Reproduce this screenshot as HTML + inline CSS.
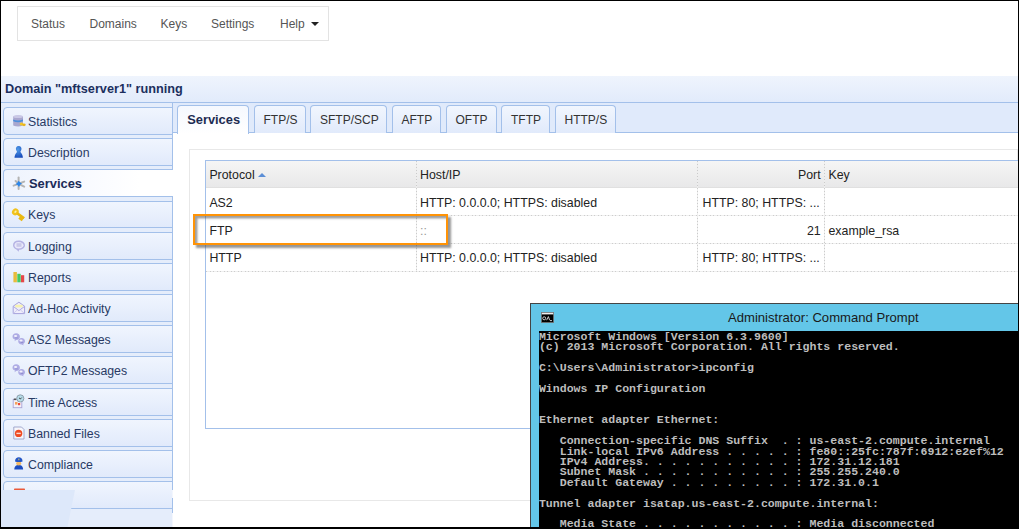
<!DOCTYPE html>
<html><head><meta charset="utf-8">
<style>
*{box-sizing:border-box}
html,body{margin:0;padding:0}
body{width:1019px;height:529px;overflow:hidden;position:relative;background:#fff;font-family:"Liberation Sans",sans-serif;font-size:12px;color:#333}
.a{position:absolute}
.t{position:absolute;white-space:nowrap;line-height:14px}
/* nav */
#nav{left:17px;top:6px;width:312px;height:35px;border:1px solid #e3e3e3;background:#fff}
.nv{color:#555;top:16.6px}
/* header */
#hdr{left:1px;top:75.5px;width:1018px;height:27.5px;background:linear-gradient(#eff4fd,#e2ebfb);border-bottom:1px solid #a3c0ea}
#hdrt{left:5px;top:81.5px;font-weight:bold;font-size:12.7px;color:#1c2f5e}
/* sidebar */
#side{left:1px;top:103px;width:172px;height:426px;background:#e5edfb;border-right:1px solid #a3c0ea}
.sb{position:absolute;left:3px;width:170px;height:28px;border:1px solid #a3c0ea;border-radius:4px 0 0 4px;background:linear-gradient(#f0f5fe,#e1eafb)}
.sb.act{background:linear-gradient(90deg,#eef3fd,#f8faff 45%,#fff 80%);border-right:none;width:171px}
.sbt{position:absolute;left:24px;top:6.5px;line-height:14px;white-space:nowrap;color:#283a64;font-size:12.3px}
.sbi{position:absolute;left:8px;top:7px;width:12px;height:12px}
/* tabs */
#tabbar{left:173px;top:103px;width:846px;height:30px;background:#e0eafb;border-bottom:1px solid #a3c0ea}
.tab{position:absolute;top:105px;height:28px;border:1px solid #a3c0ea;border-bottom:none;border-radius:4px 4px 0 0;background:linear-gradient(#f1f6fe,#e1eafb)}
.tab.act{background:linear-gradient(#f5f8fe,#fff);height:29px}
.tabt{position:absolute;top:7px;line-height:14px;white-space:nowrap;color:#333;font-size:12px}
#panel{left:173px;top:133px;width:846px;height:396px;background:#fff}
#fs{left:189px;top:149px;width:829px;height:351.5px;border:1px solid #e8e8e8}
#grid{left:205px;top:160px;width:813px;height:268.5px;border:1px solid #a3c0ea;border-right:none;background:#fff}
#ghdr{left:206px;top:161px;width:812px;height:27px;background:linear-gradient(#f5f5f5,#e8e8e9);border-bottom:1px solid #e0e0e0}
.vl{position:absolute;width:1px;background:repeating-linear-gradient(180deg,#cbcbcb 0 1px,#eeeeee 1px 3px)}
.hl{position:absolute;height:1px;background:repeating-linear-gradient(90deg,#cdcdcd 0 1px,#efefef 1px 3.5px)}
.cell{position:absolute;white-space:nowrap;line-height:14px;color:#222;font-size:12.35px}
/* cmd */
#cmd{left:530px;top:303px;width:489px;height:226px;background:#63c6e8;border:1px solid #444;border-right:none;border-bottom:none}
#cmdt{left:728px;top:309.5px;font-size:13.1px;color:#1a1a1a;line-height:16px}
#con{left:539px;top:331px;width:480px;height:198px;background:#000}
#contxt{position:absolute;left:538.9px;top:331.9px;margin:0;font-family:"Liberation Mono",monospace;font-weight:bold;font-size:11.57px;line-height:10.42px;color:#bdbdbd;white-space:pre}
#frame{left:0;top:0;width:1019px;height:529px;border-top:1px solid #000;border-left:1px solid #000;border-right:1.5px solid #000;border-bottom:2px solid #000;pointer-events:none}
</style></head><body>

<div id="nav" class="a"></div>
<div class="t nv" style="left:31px">Status</div>
<div class="t nv" style="left:89.5px">Domains</div>
<div class="t nv" style="left:160.5px">Keys</div>
<div class="t nv" style="left:211px">Settings</div>
<div class="t nv" style="left:280px">Help</div>
<div class="a" style="left:310.5px;top:22px;width:0;height:0;border-left:4px solid transparent;border-right:4px solid transparent;border-top:4.5px solid #222"></div>

<div id="hdr" class="a"></div>
<div id="hdrt" class="t">Domain "mftserver1" running</div>

<div id="side" class="a"></div>
<div class="sb" style="top:107px"><div class="sbt">Statistics</div></div>
<div class="sb" style="top:138px"><div class="sbt">Description</div></div>
<div class="sb act" style="top:169px"><div class="sbt" style="font-weight:bold;font-size:12.9px;left:25px;top:7px;color:#1b2b58">Services</div></div>
<div class="sb" style="top:200.5px;height:27.5px"><div class="sbt">Keys</div></div>
<div class="sb" style="top:232px"><div class="sbt">Logging</div></div>
<div class="sb" style="top:263px"><div class="sbt">Reports</div></div>
<div class="sb" style="top:294px"><div class="sbt">Ad-Hoc Activity</div></div>
<div class="sb" style="top:325px"><div class="sbt">AS2 Messages</div></div>
<div class="sb" style="top:356px"><div class="sbt">OFTP2 Messages</div></div>
<div class="sb" style="top:388px"><div class="sbt">Time Access</div></div>
<div class="sb" style="top:419px"><div class="sbt">Banned Files</div></div>
<div class="sb" style="top:450px"><div class="sbt">Compliance</div></div>
<div class="sb" style="top:481px"><div class="sbt"></div></div>
<div class="a" style="left:172px;top:490px;width:1px;height:8px;background:#f3f6fd"></div>
<div class="a" style="left:172px;top:513px;width:1px;height:16px;background:#f3f6fd"></div>
<div class="a" style="left:1px;top:490px;width:75px;height:39px;background:#dde8fa;clip-path:polygon(0 0,74px 0,66px 100%,0 100%)"></div>

<svg class="a" style="left:0;top:0" width="30" height="529" viewBox="0 0 30 529">
<defs>
<linearGradient id="gy" x1="0" x2="1"><stop offset="0" stop-color="#f3c626"/><stop offset="1" stop-color="#e2a80c"/></linearGradient>
<radialGradient id="bl" cx=".4" cy=".3" r=".8"><stop offset="0" stop-color="#4f9ae8"/><stop offset="1" stop-color="#1446b8"/></radialGradient>
<linearGradient id="lv" x1="0" y1="0" x2="0" y2="1"><stop offset="0" stop-color="#d6d4f4"/><stop offset="1" stop-color="#9f9de0"/></linearGradient>
</defs>
<!-- statistics: cylinder -->
<g transform="translate(0,0)">
<path d="M13.2 116.5 Q18 114.6 23 116.5 L23 125.5 Q18 127.4 13.2 125.5 Z" fill="#a9a7cf"/>
<ellipse cx="18.1" cy="116.5" rx="4.9" ry="1.6" fill="#c9c8e6"/>
<path d="M13.2 119.5 Q18 121.3 23 119.5 L23 121.3 Q18 123 13.2 121.3 Z" fill="#4d8fdc"/>
<ellipse cx="21.5" cy="124" rx="1.8" ry="1.5" fill="#f0c52a"/>
<ellipse cx="24" cy="124.8" rx="1.7" ry="1.4" fill="#e8b51a"/>
</g>
<!-- description: pawn -->
<path d="M18.6 146 C16.4 146 15.6 148 16 149.6 C16.3 150.8 17 151.5 17 152 C15.6 153.3 14.6 155.5 14.5 157.8 L22.9 157.8 C22.8 155.5 21.8 153.3 20.4 152 C20.4 151.5 21.2 150.8 21.4 149.6 C21.8 148 21 146 18.6 146 Z" fill="url(#bl)"/>
<!-- services: star network -->
<g stroke="#b4b4b4" stroke-width="2" stroke-linecap="round">
<line x1="18.6" y1="177.6" x2="18.6" y2="189"/>
<line x1="13.6" y1="185.6" x2="18.6" y2="183.8"/>
<line x1="15.6" y1="181" x2="18.6" y2="183.8"/>
<line x1="18.6" y1="183.8" x2="24.2" y2="181.6"/>
<line x1="18.6" y1="183.8" x2="24.2" y2="186.6"/>
</g>
<path d="M18.7 180.8 L20.1 182.6 L22 183.6 L20.2 184.8 L19 187 L17.6 185 L15.6 184.2 L17.4 182.8 Z" fill="#2b86ea"/>
<!-- keys -->
<g transform="rotate(35 18 214)">
<ellipse cx="14.6" cy="213.8" rx="3.2" ry="3.6" fill="#f1c21c"/>
<ellipse cx="14.6" cy="213.6" rx="1" ry="1.4" fill="#fbf0a8"/>
<rect x="17" y="212.6" width="8.5" height="2.6" fill="#e9b812"/>
<rect x="21" y="214.5" width="4.2" height="3.2" fill="#e9b812"/>
</g>
<!-- logging: bubble -->
<path d="M18.5 240.6 C22.3 240.6 25 242.4 25 245.3 C25 248 22.4 249.8 19 249.8 L18.8 251.8 L16.4 249.5 C14.3 248.8 13 247.2 13 245.3 C13 242.4 15 240.6 18.5 240.6 Z" fill="#b5b3e4"/>
<path d="M18.5 242 C21.4 242 23.5 243.3 23.5 245.3 C23.5 247.3 21.4 248.5 18.5 248.5 C15.6 248.5 14.5 247.3 14.5 245.3 C14.5 243.3 15.6 242 18.5 242 Z" fill="#e9e8fa"/>
<rect x="16.5" y="243.6" width="5" height="0.9" fill="#a9a7d8"/>
<rect x="16.5" y="245.5" width="5" height="0.9" fill="#a9a7d8"/>
<!-- reports: bars -->
<rect x="13.4" y="272" width="3.5" height="10.3" fill="#e8bc3c"/>
<rect x="17.3" y="273.8" width="3.4" height="8.5" fill="#45c963"/>
<rect x="21" y="275.2" width="3.2" height="7.1" fill="#e5484a"/>
<!-- ad-hoc: envelope -->
<path d="M13.2 306.2 L18.9 302.2 L24.6 306.2 L24.6 313.6 L13.2 313.6 Z" fill="#efedfb" stroke="#a6a2dc" stroke-width="1"/>
<rect x="15.2" y="304.8" width="7.4" height="2.6" fill="#f6f2b0"/>
<path d="M13.5 306.6 L18.9 310.6 L24.3 306.6" fill="none" stroke="#a6a2dc" stroke-width="0.9"/>
<path d="M13.5 313.3 L17.5 309.8 M24.3 313.3 L20.3 309.8" fill="none" stroke="#c4c1ea" stroke-width="0.8"/>
<!-- AS2 messages -->
<g>
<path d="M16.2 333.3 C18.4 333.3 19.9 334.8 19.9 336.7 C19.9 338.7 18.4 340 16.2 340 L14.6 341.2 L14.9 339.6 C13.3 339 12.5 337.9 12.5 336.7 C12.5 334.8 14 333.3 16.2 333.3 Z" fill="#aeacE4"/>
<ellipse cx="15.6" cy="336" rx="1.6" ry="1" fill="#f2f1fc"/>
<path d="M21.6 338 C23.7 338 25 339.4 25 341.2 C25 342.4 24.3 343.4 23.2 344 L23.6 345.6 L21.8 344.5 C19.6 344.5 18.2 343 18.2 341.2 C18.2 339.4 19.6 338 21.6 338 Z" fill="#aeacE4"/>
<ellipse cx="21" cy="340.6" rx="1.6" ry="1" fill="#f2f1fc"/>
<rect x="15.2" y="337.6" width="2.6" height="0.7" fill="#8785c8"/>
<rect x="20.6" y="342.2" width="2.6" height="0.7" fill="#8785c8"/>
</g>
<g transform="translate(0,31)">
<path d="M16.2 333.3 C18.4 333.3 19.9 334.8 19.9 336.7 C19.9 338.7 18.4 340 16.2 340 L14.6 341.2 L14.9 339.6 C13.3 339 12.5 337.9 12.5 336.7 C12.5 334.8 14 333.3 16.2 333.3 Z" fill="#aeacE4"/>
<ellipse cx="15.6" cy="336" rx="1.6" ry="1" fill="#f2f1fc"/>
<path d="M21.6 338 C23.7 338 25 339.4 25 341.2 C25 342.4 24.3 343.4 23.2 344 L23.6 345.6 L21.8 344.5 C19.6 344.5 18.2 343 18.2 341.2 C18.2 339.4 19.6 338 21.6 338 Z" fill="#aeacE4"/>
<ellipse cx="21" cy="340.6" rx="1.6" ry="1" fill="#f2f1fc"/>
<rect x="15.2" y="337.6" width="2.6" height="0.7" fill="#8785c8"/>
<rect x="20.6" y="342.2" width="2.6" height="0.7" fill="#8785c8"/>
</g>
<!-- time access -->
<rect x="13.2" y="399.5" width="8.6" height="8.2" fill="#f4f1fa" stroke="#a9a5d6" stroke-width="0.9"/>
<rect x="15" y="402" width="2.5" height="2.6" fill="#f3a25c"/>
<rect x="18" y="403" width="2.2" height="2.2" fill="#ec4a3a"/>
<rect x="13.8" y="398.5" width="2.5" height="1.6" fill="#555"/>
<circle cx="20.3" cy="398.4" r="3.6" fill="#b6dce9" stroke="#8a9aa6" stroke-width="0.9"/>
<path d="M19 397.8 L20.3 399 L21.7 397.6" stroke="#444" stroke-width="1" fill="none"/>
<!-- banned files -->
<path d="M13.8 427 L21.5 427 L24 429.5 L24 439 L13.8 439 Z" fill="#f6f6fb" stroke="#9aa0c8" stroke-width="0.9"/>
<circle cx="18.6" cy="433.4" r="3.7" fill="#ee4a22"/>
<rect x="16.4" y="432.7" width="4.4" height="1.4" fill="#ffd9cc"/>
<!-- compliance -->
<path d="M14.3 469.6 C14.3 466.2 16.2 465 18.7 465 C21.2 465 23.1 466.2 23.1 469.6 Z" fill="#1c4cc0"/>
<ellipse cx="18.7" cy="463.2" rx="2.5" ry="2.3" fill="#f2b865"/>
<path d="M15 461.6 C15 458.6 16.8 457.3 18.8 457.3 C20.9 457.3 22.5 458.6 22.6 461.4 L20.8 462 L16.8 462 Z" fill="#2456c6"/>
<rect x="18.4" y="458.6" width="0.9" height="1.6" fill="#e8d060"/>
<!-- last (partially hidden) red -->
<rect x="14" y="488.6" width="11" height="1.5" rx="0.7" fill="#ea5a3a"/>
</svg>
<div id="tabbar" class="a"></div>
<div id="panel" class="a"></div>
<div class="tab act" style="left:177px;width:72px"><div class="tabt" style="left:9.2px;font-weight:bold;font-size:12.85px;color:#1d2c52">Services</div></div>
<div class="tab" style="left:254px;width:52px"><div class="tabt" style="left:8.5px">FTP/S</div></div>
<div class="tab" style="left:310px;width:77px"><div class="tabt" style="left:9px">SFTP/SCP</div></div>
<div class="tab" style="left:392px;width:49px"><div class="tabt" style="left:8.5px">AFTP</div></div>
<div class="tab" style="left:446px;width:51px"><div class="tabt" style="left:8.5px">OFTP</div></div>
<div class="tab" style="left:501px;width:49px"><div class="tabt" style="left:9px">TFTP</div></div>
<div class="tab" style="left:555px;width:61px"><div class="tabt" style="left:8.5px">HTTP/S</div></div>

<div id="fs" class="a"></div>
<div id="grid" class="a"></div>
<div id="ghdr" class="a"></div>

<div class="vl" style="left:416px;top:161px;height:110px"></div>
<div class="vl" style="left:697px;top:161px;height:110px"></div>
<div class="vl" style="left:824px;top:161px;height:110px"></div>
<div class="hl" style="left:206px;top:215px;width:812px"></div>
<div class="hl" style="left:206px;top:243px;width:812px"></div>
<div class="hl" style="left:206px;top:271px;width:812px"></div>

<div class="cell" style="left:209.4px;top:168px">Protocol</div>
<div class="a" style="left:257.5px;top:172.8px;width:0;height:0;border-left:4px solid transparent;border-right:4px solid transparent;border-bottom:4px solid #5b8ed6"></div>
<div class="cell" style="left:420px;top:168px">Host/IP</div>
<div class="cell" style="left:798px;top:168px">Port</div>
<div class="cell" style="left:828.5px;top:168px">Key</div>

<div class="cell" style="left:209.4px;top:196px">AS2</div>
<div class="cell" style="left:420px;top:196px">HTTP: 0.0.0.0; HTTPS: disabled</div>
<div class="cell" style="left:702.5px;top:196px">HTTP: 80; HTTPS: ...</div>

<div class="cell" style="left:209.4px;top:224px">FTP</div>
<div class="cell" style="left:420px;top:224px;color:#999">::</div>
<div class="cell" style="left:807px;top:224px">21</div>
<div class="cell" style="left:828.5px;top:224px">example_rsa</div>

<div class="cell" style="left:209.4px;top:251px">HTTP</div>
<div class="cell" style="left:420px;top:251px">HTTP: 0.0.0.0; HTTPS: disabled</div>
<div class="cell" style="left:702.5px;top:251px">HTTP: 80; HTTPS: ...</div>

<!-- orange box -->
<div class="a" style="left:193px;top:214px;width:255px;height:30.5px;border:2px solid #ff9306;box-shadow:2.5px 2.5px 2px rgba(80,80,80,.6), inset 2.5px 2.5px 2px rgba(80,80,80,.55)"></div>

<!-- cmd -->
<div id="cmd" class="a"></div>
<svg class="a" style="left:541px;top:311.5px" width="13" height="11" viewBox="0 0 13 11"><rect x="0.4" y="0.4" width="12.2" height="10.2" fill="#000" stroke="#777" stroke-width="0.8"/><rect x="0.8" y="0.8" width="11.4" height="1.6" fill="#eee"/><circle cx="3.2" cy="6.3" r="1.5" fill="none" stroke="#ddd" stroke-width="0.9"/><path d="M5.6 8.2 L7.4 4.6 M7.4 4.6 L8.6 8.2 M9 8.6 H11" stroke="#ddd" stroke-width="0.9" fill="none"/></svg>
<div id="cmdt" class="t">Administrator: Command Prompt</div>
<div id="con" class="a"></div>
<pre id="contxt">Microsoft Windows [Version 6.3.9600]
(c) 2013 Microsoft Corporation. All rights reserved.

C:\Users\Administrator>ipconfig

Windows IP Configuration


Ethernet adapter Ethernet:

   Connection-specific DNS Suffix  . : us-east-2.compute.internal
   Link-local IPv6 Address . . . . . : fe80::25fc:787f:6912:e2ef%12
   IPv4 Address. . . . . . . . . . . : 172.31.12.181
   Subnet Mask . . . . . . . . . . . : 255.255.240.0
   Default Gateway . . . . . . . . . : 172.31.0.1

Tunnel adapter isatap.us-east-2.compute.internal:

   Media State . . . . . . . . . . . : Media disconnected</pre>

<div id="frame" class="a"></div>
</body></html>
